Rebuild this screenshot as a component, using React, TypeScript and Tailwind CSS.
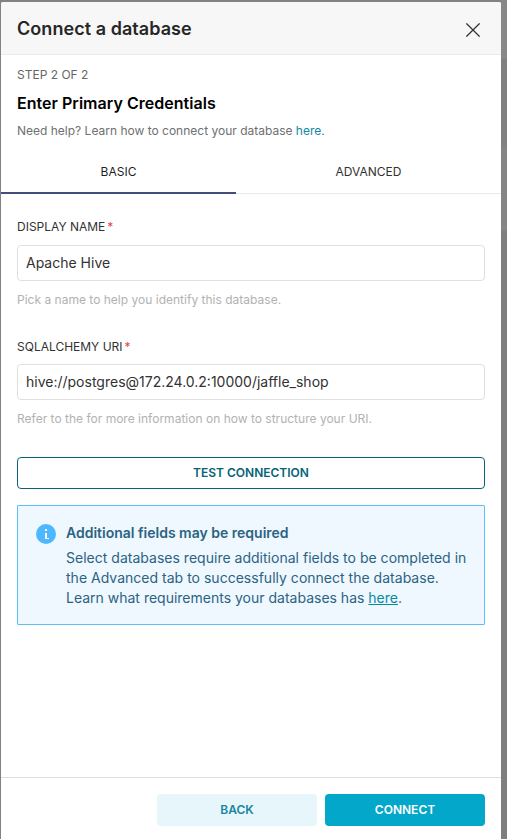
import React from "react";

type FieldProps = { label: string; value: string; help: string; className?: string; inputGap: string };

function Field({ label, value, help, className = "", inputGap }: FieldProps) {
  return (
    <div className={className}>
      <label className="flex h-5 items-center text-[12px] leading-5 text-[#323232]">
        {label}
        <span className="ml-[2px] text-[#e04355]">*</span>
      </label>
      <input
        type="text"
        readOnly
        value={value}
        className={`${inputGap} block h-9 w-full rounded border border-[#dfdfdf] bg-white px-2 pb-[2px] text-[14px] text-[#323232] outline-none`}
      />
      <p className="mt-[9px] h-5 text-[12px] leading-5 tracking-[0.01px] text-[#b2b2b2]">{help}</p>
    </div>
  );
}

export default function App() {
  return (
    <div className="flex h-[839px] w-[507px] overflow-hidden bg-[#828282] pl-px pt-[2px] font-['Inter','Liberation_Sans',sans-serif]">
      <section className="flex w-[500px] flex-col overflow-hidden rounded-t-[2px] bg-white">
        <header className="flex h-[53px] shrink-0 items-center justify-between border-b border-[#ebebeb] bg-[#f7f7f7] pl-4 pr-[21px]">
          <h1 className="pt-[2px] text-[18px] font-semibold leading-6 tracking-[0.05px] text-[#262626]">Connect a database</h1>
          <button aria-label="Close" className="mt-[3px] size-[14px]">
            <svg viewBox="0 0 14 14" className="block size-[14px]" fill="none" stroke="#323232" strokeWidth="1.25">
              <path d="M0.4 0.4 13.6 13.6M13.6 0.4 0.4 13.6" />
            </svg>
          </button>
        </header>

        <div className="px-4 pt-[10px]">
          <p className="h-5 text-[12px] leading-5 text-[#666666]">STEP 2 OF 2</p>
          <h2 className="mt-[6px] h-6 text-[16px] font-semibold leading-6 tracking-[0.03px] text-black">Enter Primary Credentials</h2>
          <p className="mt-[6px] h-5 text-[12px] leading-5 text-[#707070]">
            Need help? Learn how to connect your database <a className="text-[#0f87a2]">here</a>.
          </p>
        </div>

        <nav className="mt-[10px] flex h-[43px] shrink-0 border-b border-[#ebebeb] text-[12px] text-[#323232]">
          <button className="-mb-px flex h-[43px] w-[235px] items-start justify-center border-b-2 border-[#444e7c] pt-[11px] leading-5 text-[#1f1f1f]">
            BASIC
          </button>
          <button className="flex flex-1 items-start justify-center pt-[11px] leading-5">ADVANCED</button>
        </nav>

        <main className="flex-1 px-4 pt-[23px]">
          <Field inputGap="mt-2" label="DISPLAY NAME" value="Apache Hive" help="Pick a name to help you identify this database." />
          <Field
            className="mt-[27px]"
            inputGap="mt-[7px]"
            label="SQLALCHEMY URI"
            value="hive://postgres@172.24.0.2:10000/jaffle_shop"
            help="Refer to the for more information on how to structure your URI."
          />
          <button className="mt-7 flex h-8 w-full items-center justify-center rounded border border-[#066378] text-[12px] font-semibold text-[#066378]">
            TEST CONNECTION
          </button>
          <aside className="mt-4 flex h-[120px] rounded-[1px] border border-[#5ac0f5] bg-[#eff7ff] pl-[18px] pt-[17px] text-[14px] text-[#2b6382]">
            <svg viewBox="0 0 20 20" className="mt-px size-5 shrink-0">
              <circle cx="10" cy="10" r="10" fill="#4db8ff" />
              <path d="M9 5h2v2H9zM9 9h2v5h2v1H9z" fill="white" />
            </svg>
            <div className="ml-[10px] leading-5">
              <h3 className="font-semibold">Additional fields may be required</h3>
              <p className="mt-[5px] whitespace-nowrap">
                <span className="tracking-[0.015px]">
                  Select databases require additional fields to be completed in
                  <br />
                  the Advanced tab to successfully connect the database.
                </span>
                <br />
                Learn what requirements your databases has <a className="text-[#078ba0] underline">here</a>.
              </p>
            </div>
          </aside>
        </main>

        <footer className="flex h-[62px] shrink-0 justify-end gap-2 border-t border-[#dfdfdf] px-4 pt-4 text-[12px] font-semibold">
          <button className="h-8 w-40 rounded bg-[#e6f6fa] text-[#1985a0]">BACK</button>
          <button className="h-8 w-40 rounded bg-[#02a7c9] text-white">CONNECT</button>
        </footer>
      </section>
      <div className="-mt-[2px] flex w-[6px] flex-col">
        <div className="h-[59px] bg-[#888888]" />
        <div className="h-[88px] bg-[#808080]" />
        <div className="h-[84px] bg-[#858585]" />
        <div className="flex-1 bg-[#7f7f7f]" />
      </div>
    </div>
  );
}
